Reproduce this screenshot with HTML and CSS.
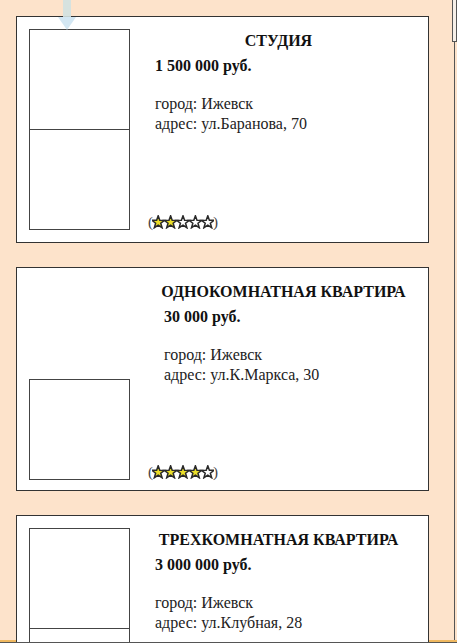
FILE: index.html
```html
<!DOCTYPE html>
<html lang="ru">
<head>
    <meta charset="UTF-8">
    <meta name="viewport" content="width=device-width, initial-scale=1.0">
    <title>Недвижимость Ижевска</title>
    <link rel="stylesheet" href="styles.css">
</head>
<body>
    <svg class="defs" width="0" height="0" aria-hidden="true">
        <defs>
            <path id="star" d="M0,-6.6 L1.59,-2.18 L6.28,-2.04 L2.57,0.83 L3.88,5.34 L0,2.7 L-3.88,5.34 L-2.57,0.83 L-6.28,-2.04 L-1.59,-2.18 Z"/>
        </defs>
    </svg>

    <!-- drag hint arrow -->
    <svg class="drop-arrow" width="20" height="31" viewBox="0 0 20 31">
        <rect x="6" y="0" width="8" height="18" fill="#d2e2e2"/>
        <polygon points="1,17 19,17 10,30" fill="#cfe5f2"/>
    </svg>
    <div class="scroll-thumb"></div>

    <div class="listings">
        <div class="card">
            <div class="card-photos">
                <div class="photo"></div>
                <div class="photo"></div>
            </div>
            <div class="card-body">
                <div class="card-info">
                    <div class="card-title">СТУДИЯ</div>
                    <div class="card-price">1 500 000 руб.</div>
                    <div class="card-details">
                        <div>город: Ижевск</div>
                        <div>адрес: ул.Баранова, 70</div>
                    </div>
                </div>
                <div class="rating">(<svg width="62" height="14" viewBox="0 0 62 14">
                    <use href="#star" x="6.2" y="7.4" class="on"/>
                    <use href="#star" x="18.6" y="7.4" class="on"/>
                    <use href="#star" x="31" y="7.4" class="off"/>
                    <use href="#star" x="43.4" y="7.4" class="off"/>
                    <use href="#star" x="55.8" y="7.4" class="off"/>
                </svg>)</div>
            </div>
        </div>

        <div class="card card--short">
            <div class="card-photos">
                <div class="photo photo--missing"></div>
                <div class="photo"></div>
            </div>
            <div class="card-body">
                <div class="card-info card-info--shifted">
                    <div class="card-title">ОДНОКОМНАТНАЯ КВАРТИРА</div>
                    <div class="card-price">30 000 руб.</div>
                    <div class="card-details">
                        <div>город: Ижевск</div>
                        <div>адрес: ул.К.Маркса, 30</div>
                    </div>
                </div>
                <div class="rating">(<svg width="62" height="14" viewBox="0 0 62 14">
                    <use href="#star" x="6.2" y="7.4" class="on"/>
                    <use href="#star" x="18.6" y="7.4" class="on"/>
                    <use href="#star" x="31" y="7.4" class="on"/>
                    <use href="#star" x="43.4" y="7.4" class="on"/>
                    <use href="#star" x="55.8" y="7.4" class="off"/>
                </svg>)</div>
            </div>
        </div>

        <div class="card">
            <div class="card-photos">
                <div class="photo"></div>
                <div class="photo"></div>
            </div>
            <div class="card-body">
                <div class="card-info">
                    <div class="card-title">ТРЕХКОМНАТНАЯ КВАРТИРА</div>
                    <div class="card-price">3 000 000 руб.</div>
                    <div class="card-details">
                        <div>город: Ижевск</div>
                        <div>адрес: ул.Клубная, 28</div>
                    </div>
                </div>
                <div class="rating">(<svg width="62" height="14" viewBox="0 0 62 14">
                    <use href="#star" x="6.2" y="7.4" class="on"/>
                    <use href="#star" x="18.6" y="7.4" class="on"/>
                    <use href="#star" x="31" y="7.4" class="on"/>
                    <use href="#star" x="43.4" y="7.4" class="off"/>
                    <use href="#star" x="55.8" y="7.4" class="off"/>
                </svg>)</div>
            </div>
        </div>
    </div>

    <div class="edge-shade"></div>
    <div class="edge-line"></div>
</body>
</html>
```

FILE: styles.css
```css
html, body {
    margin: 0;
    padding: 0;
    background-color: #fde3cb;
    font-family: "Liberation Serif", "Times New Roman", serif;
    color: #111;
}
.defs {
    position: absolute;
}
.listings {
    width: 455px;
    min-height: 100vh;
    box-sizing: border-box;
    padding: 16px 0 10px 16px;
    border-right: 1px solid #555;
}
.card {
    position: relative;
    z-index: 1;
    display: flex;
    width: 413px;
    box-sizing: border-box;
    padding: 12px;
    margin-bottom: 24px;
    background-color: #fff;
    border: 1px solid #333;
}
.card--short {
    padding-bottom: 10px;
}
.card-photos {
    display: flex;
    flex-direction: column;
    width: 101px;
}
.photo {
    height: 101px;
    box-sizing: border-box;
    border: 1px solid #444;
}
.photo + .photo {
    margin-top: -1px;
}
.photo--missing {
    height: 100px;
    border-color: transparent;
}
.card-body {
    flex: 1;
    display: flex;
    flex-direction: column;
    margin-left: 11px;
}
.card-info {
    padding-top: 3px;
}
.card-info--shifted {
    padding-left: 10px;
}
.card-title {
    text-align: center;
    font-size: 16px;
    font-weight: bold;
}
.card-price {
    margin-top: 7px;
    padding-left: 14px;
    font-size: 16px;
    font-weight: bold;
}
.card-info--shifted .card-price,
.card-info--shifted .card-details {
    padding-left: 13px;
}
.card-details {
    margin-top: 19px;
    padding-left: 14px;
    font-size: 16px;
    line-height: 20px;
    color: #222;
}
.rating {
    margin-top: auto;
    padding-left: 7px;
    font-size: 15px;
    line-height: 15px;
    color: #444;
}
.rating svg {
    vertical-align: -2px;
    margin: 0 -1px;
}
.rating .on {
    fill: #ece02a;
    stroke: #2a2a2a;
    stroke-width: 1.5;
}
.rating .off {
    fill: #fff;
    stroke: #2a2a2a;
    stroke-width: 1.5;
}
/* overlays */
.drop-arrow {
    position: absolute;
    left: 57px;
    top: 0;
    z-index: 2;
    opacity: 0.9;
}
.scroll-thumb {
    position: absolute;
    top: 0;
    left: 452px;
    width: 3px;
    height: 41px;
    border: 1px solid #555;
    border-top: none;
    background-color: #f6efe8;
}
.edge-shade {
    position: fixed;
    left: 0;
    right: 0;
    bottom: 1px;
    height: 2px;
    background-color: #efb860;
}
.edge-line {
    position: fixed;
    left: 0;
    right: 0;
    bottom: 0;
    height: 1px;
    z-index: 3;
    background-color: #555;
}
```
